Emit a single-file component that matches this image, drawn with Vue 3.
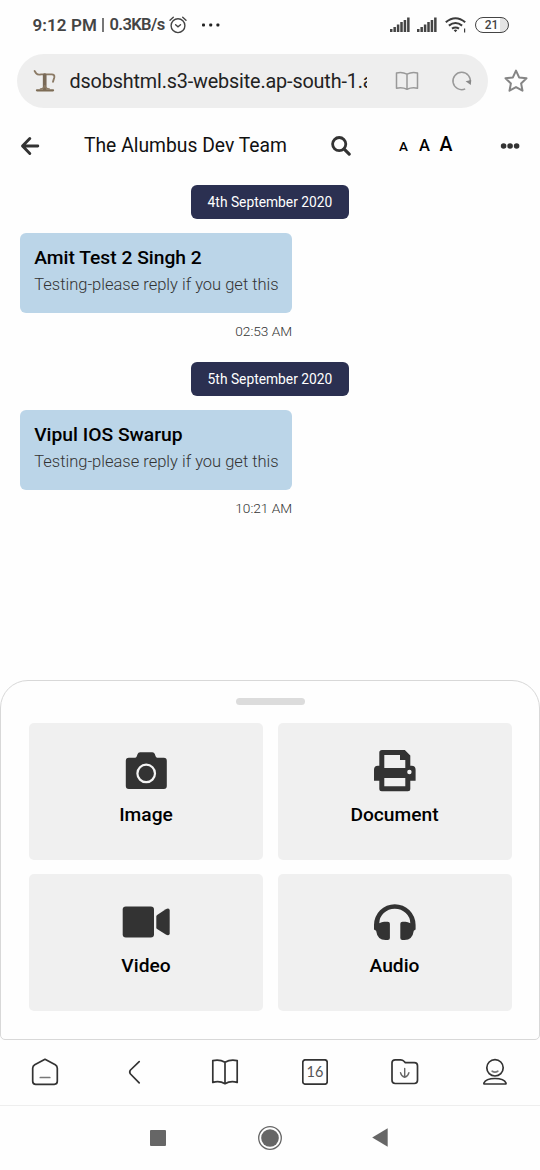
<script setup>
const groups = [
  { date: '4th September 2020', name: 'Amit Test 2 Singh 2', text: 'Testing-please reply if you get this', time: '02:53 AM', key: 'amit' },
  { date: '5th September 2020', name: 'Vipul IOS Swarup', text: 'Testing-please reply if you get this', time: '10:21 AM', key: 'vipul' },
]
const bars = [3, 5, 7.5, 10, 12, 14.5]
</script>

<template>
  <div class="phone">
    <div class="status">
      <span class="clock">9:12 PM</span><span class="pipe"></span><span class="speed">0.3KB/s</span>
      <svg class="alarm" width="18" height="18" viewBox="0 0 18 18" fill="none" stroke="#444" stroke-width="1.4" stroke-linecap="round">
        <circle cx="9" cy="9.7" r="6.9" /><path d="M6.6 8.8 9 10.9l2.5-2.1M1 4.2 4.3 1.3M17 4.2l-3.3-2.9" />
      </svg>
      <svg class="more" width="20" height="4" viewBox="0 0 20 4" fill="#222"><rect x="1" y="0.5" width="3" height="3" rx="1" /><rect x="8.2" y="0.5" width="3" height="3" rx="1" /><rect x="15.4" y="0.5" width="3" height="3" rx="1" /></svg>
      <svg v-for="n in 2" :key="n" class="signal" width="20" height="15" viewBox="0 0 20 15" fill="#444">
        <rect v-for="(h, i) in bars" :key="i" :x="i * 3.42" :y="15 - h" width="2.5" :height="h" />
      </svg>
      <svg class="wifi" width="22" height="16" viewBox="0 0 22 16" fill="none" stroke="#3c3c3c" stroke-width="2.1">
        <path d="M.8 5.3Q10.5-2.8 20.2 5.3M3.9 8.6q6.6-5.2 13.2 0M7 11.7q3.5-2.5 7 0" /><path d="m8.7 13.2 1.8 2 1.8-2q-1.8-1.2-3.6 0Z" fill="#3c3c3c" stroke="none" /><path d="M19.6 11.5v4" stroke-width="1.2" />
      </svg>
      <div class="battery"><span>21</span></div>
    </div>

    <div class="browser">
      <div class="address">
        <svg width="24" height="24" viewBox="0 0 24 24" fill="none" stroke="#8b7a65" stroke-linecap="round">
          <path d="M1.600 2 3.200 4.300Q4.800 6.200 8 5.400h10.800Q21.800 5.400 21.300 8.400L20 12.800" stroke-width="1.900" />
          <path d="M11.700 6v14" stroke-width="3.700" stroke="#796a58" /><path d="M4 21.300h16" stroke-width="2.300" stroke="#7d6c55" /><path d="M7.500 20q4-.5 4.200-4 .3 3.500 4.500 4" stroke-width="1.500" />
        </svg>
        <span class="url">dsobshtml.s3-website.ap-south-1.a</span>
        <svg class="reader" width="24" height="20" viewBox="0 0 24 20" fill="none" stroke="#999" stroke-width="1.5" stroke-linejoin="round"><path d="M12 3.2Q7 .5 1.5 2v15.3Q7 16 12 18.3 17 16 22.5 17.3V2Q17 .5 12 3.2v15" /></svg>
        <svg class="reload" width="22" height="22" viewBox="0 0 22 22" fill="none" stroke="#999" stroke-width="1.5"><path d="M14.2 18.9A8.7 8.7 0 1 1 19.1 13" /><path d="m14.600 11.200 5.600-1.300-.4 5.200Z" fill="#888" stroke="none" /></svg>
      </div>
      <svg class="star" width="26" height="26" viewBox="0 0 26 26" fill="none" stroke="#858585" stroke-width="2" stroke-linejoin="round"><path d="m13 2.6 3.1 6.8 7.4.9-5.4 5.1 1.4 7.3-6.5-3.6-6.5 3.6 1.4-7.3-5.4-5.1 7.4-.9Z" /></svg>
    </div>

    <header class="chatbar">
      <svg class="back" width="20" height="20" viewBox="0 0 20 20" fill="none" stroke="#333" stroke-width="2.9" stroke-linecap="round" stroke-linejoin="round"><path d="M9.8 2.6 2.5 10l7.3 7.4M3 10h14.8" /></svg>
      <h1>The Alumbus Dev Team</h1>
      <svg class="search" width="20" height="20" viewBox="0 0 20 20" fill="none" stroke="#333"><circle cx="8.2" cy="8.1" r="6.6" stroke-width="2.8" /><path d="m13.2 13.2 5 5" stroke-width="3.1" stroke-linecap="round" /></svg>
      <div class="sizes"><span class="small">A</span><span class="medium">A</span><span class="large">A</span></div>
      <svg class="dots" width="20" height="6" viewBox="0 0 20 6" fill="#333"><circle cx="3.6" cy="3" r="2.8" /><circle cx="10.1" cy="3" r="2.8" /><circle cx="16.6" cy="3" r="2.8" /></svg>
    </header>

    <main class="messages">
      <section v-for="g in groups" :key="g.key" class="group">
        <div class="date"><span>{{ g.date }}</span></div>
        <article class="bubble">
          <h2>{{ g.name }}</h2>
          <p>{{ g.text }}</p>
        </article>
        <time>{{ g.time }}</time>
      </section>
    </main>

    <section class="sheet">
      <div class="handle"></div>
      <div class="cards">
        <div class="card">
          <svg width="48" height="48" viewBox="0 0 48 48"><path d="M6.8 10.7h6.4q1.2 0 1.7-1.8l.7-1.9q.6-1.7 2.5-1.7h12.2q1.9 0 2.5 1.7l.7 1.9q.5 1.8 1.7 1.8h6.6q3 0 3 3V39q0 3-3 3h-35q-3 0-3-3V13.7q0-3 3-3Z" fill="#333" /><circle cx="24.2" cy="26.4" r="8.8" fill="none" stroke="#f4f4f4" stroke-width="2.2" /></svg>
          <span>Image</span>
        </div>
        <div class="card">
          <svg width="48" height="48" viewBox="0 0 48 48"><path fill="#333" fill-rule="evenodd" d="M11 3h22.8l5.5 5.6v10.1h1.4q3.9 0 3.9 4v11h-5.3v8.1q0 2.5-2.5 2.5h-26q-2.5 0-2.5-2.5v-8.1H3v-11q0-4 3.9-4h1.4V5.6Q8.300 3 11 3Zm2.300 5v13h21v-8H29V8Zm0 23.100v8.200h21v-8.200Z" /><circle cx="38.400" cy="25" r="2.200" fill="#f4f4f4" /></svg>
          <span>Document</span>
        </div>
        <div class="card">
          <svg width="48" height="48" viewBox="0 0 48 48" fill="#333"><rect x=".7" y="8.400" width="31.300" height="31" rx="3.200" /><path d="M34.300 18.500q0-1 .8-1.600l8.700-5.600q1.100-.7 2.200-.7 1.700 0 1.700 2v22.700q0 2-1.700 2-1.100 0-2.200-.7l-8.700-5.600q-.8-.6-.8-1.600Z" /></svg>
          <span>Video</span>
        </div>
        <div class="card">
          <svg width="48" height="48" viewBox="0 0 48 48" fill="#333"><path d="M3 31.600V27a20.800 20.800 0 0 1 41.600 0v4.600l-1.800 1.100Q41.500 42 33.500 42h-2q-2.200 0-2.200-2V25.800q0-2.100 2.200-2.100h3q2.500 0 4.800 1.500A15.500 14.500 0 0 0 8.300 25.200q2.300-1.500 4.800-1.500h3.600q2.200 0 2.200 2.100V40q0 2-2.200 2h-2.200Q6.400 42 5.100 32.700Z" /></svg>
          <span>Audio</span>
        </div>
      </div>
    </section>

    <nav class="browser-nav">
      <svg width="30" height="30" viewBox="0 0 30 30"><path d="m15 2.300 10.300 5.400q2 1.200 2 3.500v13.100q0 3-3 3H5.700q-3 0-3-3V11.200q0-2.300 2-3.500Z" /><path d="M10.300 20.500h9.500" stroke="#777" /></svg>
      <svg width="30" height="30" viewBox="0 0 30 30"><path d="M19.200 4.700 10.500 13q-1.600 2 0 4l8.700 8.800" /></svg>
      <svg width="30" height="30" viewBox="0 0 30 30"><path d="M15 5.200Q9.500 2 2.800 3.600v21.800Q9.500 23.500 15 26.700q5.500-3.200 12.200-1.300V3.600Q20.500 2 15 5.200v21" /></svg>
      <div class="tabs"><svg width="26" height="26" viewBox="0 0 26 26"><rect x=".8" y=".8" width="24.400" height="24.400" rx="2.500" /></svg><span>16</span></div>
      <svg width="30" height="30" viewBox="0 0 30 30"><path d="M5.200 2.800h5.500q2 0 3 1.200l1.600 1.700h9q3.200 0 3.200 3v14.600q0 3.200-3.200 3.200H5.200q-3.200 0-3.200-3.200V5.800q0-3 3.200-3Z" /><path d="M14.700 11.500v8.700m-4.200-4.600q.7 3.700 4.200 4.600 3.500-.9 4.200-4.600" stroke="#666" stroke-width="1.400" /></svg>
      <svg width="30" height="30" viewBox="0 0 30 30"><circle cx="15" cy="10.800" r="8.200" /><path d="M12.200 14.200q2.800 1.700 5.600 0" stroke="#777" /><path d="M4.500 27q-.8 0-.6-1Q6 21.500 15 21.500T26 26q.2 1-.6 1Z" /></svg>
    </nav>

    <div class="system-nav">
      <div class="recent"></div>
      <svg class="home" width="24" height="24" viewBox="0 0 24 24"><circle cx="12" cy="12" r="11.300" fill="none" stroke="#666" stroke-width="1.300" /><circle cx="12" cy="12" r="8.800" fill="#666" /></svg>
      <svg class="prev" width="16" height="19" viewBox="0 0 16 19"><path d="M.2 9.500 15.700.3v18.400Z" fill="#666" /></svg>
    </div>
  </div>
</template>

<style>
body { margin: 0; background: #fff; }
</style>

<style scoped>
.phone { width: 540px; height: 1170px; overflow: hidden; background: #fefefe; color: #000; font-family: Roboto, "Liberation Sans", sans-serif; display: flex; flex-direction: column; }
.phone svg { display: block; flex: none; }
.phone span, h1, h2, p, time { white-space: nowrap; }

.status { height: 54px; flex: none; display: flex; align-items: center; box-sizing: border-box; padding: 0 30px 5px 32.500px; color: #444; font-size: 17px; font-weight: 600; }
.clock { width: 69.500px; flex: none; letter-spacing: .1px; }
.pipe { width: 1.5px; height: 14px; background: #777; margin-right: 6px; flex: none; }
.speed { width: 60px; flex: none; font-size: 16.500px; letter-spacing: -.6px; }
.alarm { margin-left: -1px; }
.more { margin-left: 14px; }
.signal { margin-left: 7px; }
.more + .signal { margin-left: 169.500px; }
.wifi { margin-left: 7.500px; }
.battery { margin-left: 8px; width: 34px; height: 16px; box-sizing: border-box; border: 1.500px solid #444; border-radius: 8px; background: linear-gradient(90deg, #fefefe 74%, #e4e4e4 74%); display: grid; place-items: center; font-size: 12px; line-height: 12px; font-weight: 500; flex: none; }

.browser { height: 54px; flex: none; display: flex; align-items: center; padding-left: 17px; }
.address { width: 471px; height: 54px; flex: none; border-radius: 27px; background: #eee; display: flex; align-items: center; padding-left: 16px; box-sizing: border-box; }
.url { width: 297.500px; flex: none; margin-left: 12.500px; overflow: hidden; font-size: 19.800px; letter-spacing: -.15px; color: #222; line-height: 28px; padding-top: 2px; }
.reader { margin-left: 27.500px; }
.reload { margin-left: 32px; }
.star { margin-left: 15px; }

.chatbar { height: 76.500px; flex: none; display: flex; align-items: center; padding: 0 0 1px 19.500px; box-sizing: border-box; }
h1 { margin: 0 0 0 44.500px; width: 247px; flex: none; font-size: 19.300px; line-height: 24px; font-weight: 400; color: #111; padding-top: 1px; }
.sizes { display: flex; align-items: baseline; margin-left: 48px; width: 101px; line-height: 24px; font-weight: 500; }
.sizes span { width: 20.500px; }
.sizes .small { width: 20px; font-size: 13.500px; }
.medium { font-size: 16.500px; }
.large { font-size: 19.500px; }

.messages { height: 495.500px; flex: none; padding-left: 20.200px; }
.group { height: 177.300px; display: flex; flex-direction: column; }
.date { margin-left: 171px; width: 157.500px; height: 34.500px; border-radius: 6px; background: #2b3051; color: #fff; display: grid; place-items: center; font-size: 13.800px; flex: none; }
.bubble { margin-top: 13.500px; width: 272px; height: 80.500px; flex: none; border-radius: 6px; background: #bbd5e8; box-sizing: border-box; padding: 13.500px 14px 0; }
h2 { margin: 0; font-size: 19.250px; line-height: 24px; font-weight: 500; }
p { margin: 3.500px 0 0; font-size: 16.500px; line-height: 22px; font-weight: 300; color: #333; }
time { width: 272px; margin-top: 8.500px; text-align: right; font-size: 13.700px; line-height: 18px; font-weight: 300; color: #333; }

.sheet { height: 359.500px; flex: none; box-sizing: border-box; border: 1.500px solid #d8d8d8; border-radius: 28px 28px 5px 5px; }
.handle { margin: 17px auto 0; width: 69px; height: 7px; border-radius: 3.500px; background: #dcdcdc; }
.cards { display: grid; grid-template-columns: 234px 234px; grid-auto-rows: 136.500px; gap: 14.500px 14.500px; margin: 18px 0 0 28px; }
.card { background: #f0f0f0; border-radius: 5px; display: flex; flex-direction: column; align-items: center; padding-top: 24px; box-sizing: border-box; font-size: 19.200px; line-height: 24px; font-weight: 500; }
.card span { margin-top: 7.800px; }

.browser-nav { height: 66px; flex: none; box-sizing: border-box; border-bottom: 1px solid #eee; display: grid; grid-template-columns: repeat(6, 90px); place-items: center; }
.browser-nav svg { fill: none; stroke: #333; stroke-width: 1.700; stroke-linecap: round; stroke-linejoin: round; }
.tabs { display: grid; place-items: center; font: 400 14.500px/18px Lato, sans-serif; color: #555; }
.tabs > * { grid-area: 1 / 1; }
.system-nav { flex: 1; display: flex; align-items: center; padding-left: 150px; }
.recent { width: 16px; height: 16px; background: #666; border-radius: 1px; }
.home { margin-left: 92px; }
.prev { margin-left: 90px; }
</style>
